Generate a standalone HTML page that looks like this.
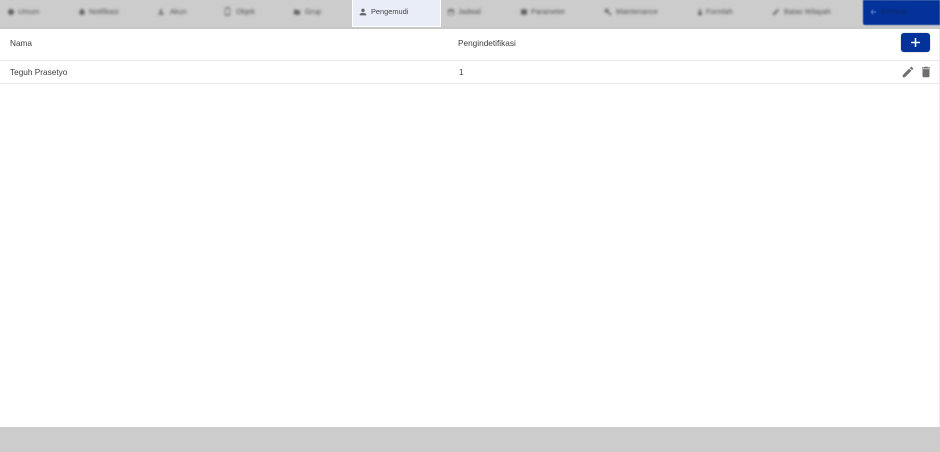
<!DOCTYPE html>
<html lang="id">
<head>
<meta charset="utf-8">
<title>Pengemudi</title>
<style>
html,body{margin:0;padding:0;width:940px;height:452px;overflow:hidden;background:#fff;font-family:"Liberation Sans",sans-serif;}
*{box-sizing:border-box;}
.a{position:absolute;}
#top{left:0;top:0;width:940px;height:29px;background:#cccccc;box-shadow:inset 0 -3px 3px -2px #c2c2c2;}
.tab{position:absolute;top:0;height:24px;filter:blur(1.2px);font-size:7.3px;color:#505050;line-height:24px;white-space:nowrap;}
.tab svg{position:absolute;top:8px;left:1px;width:8px;height:8px;fill:#5f5f5f;}
.tab span{position:absolute;top:0;}
#active{left:352px;top:0;width:89px;height:27px;background:#e8edf7;border:1px solid #fff;border-top:0;filter:blur(.3px);}
#active svg{position:absolute;left:5px;top:7px;width:10px;height:10px;fill:#666;}
#active span{position:absolute;left:18px;top:6px;font-size:7.4px;line-height:12px;color:#444;white-space:nowrap;}
#back{left:863px;top:0;width:77px;height:25px;background:#03339a;border-radius:0 0 0 2px;filter:blur(.5px);}
#back i{position:absolute;left:7px;top:9px;width:6px;height:6px;}
#back span{position:absolute;left:18px;top:6px;font-size:7.3px;line-height:12px;color:#0f2660;filter:blur(.7px);white-space:nowrap;}
.t{position:absolute;font-size:8.25px;line-height:12px;color:#3d3d3d;white-space:nowrap;filter:blur(.3px);}
.line{position:absolute;left:0;width:939px;height:1px;background:#e8e8e8;}
#add{left:901px;top:33px;width:29px;height:19px;background:#03339a;border-radius:3px;box-shadow:0 0 1px #777;}
#bottom{left:0;top:427px;width:940px;height:25px;background:#cccccc;}
#edge{left:939px;top:29px;width:1px;height:398px;background:#ececec;}
.ic{filter:blur(.35px);}
</style>
</head>
<body>
<div class="a" id="top"></div>

<div class="tab" style="left:6px;width:50px;"><svg viewBox="0 0 24 24"><circle cx="12" cy="12" r="9"/></svg><span style="left:12px">Umum</span></div>
<div class="tab" style="left:77px;width:60px;"><svg viewBox="0 0 24 24"><path d="M12 22a2 2 0 0 0 2-2h-4a2 2 0 0 0 2 2zm7-6v-5c0-3.500-2-6-5-6.700V3h-4v1.300C7 5 5 7.500 5 11v5l-2 2v1h18v-1z"/></svg><span style="left:12px">Notifikasi</span></div>
<div class="tab" style="left:156px;width:50px;"><svg viewBox="0 0 24 24"><path d="M12 12a4 4 0 1 0 0-8 4 4 0 0 0 0 8zm0 2c-3 0-8 1.500-8 4v2h16v-2c0-2.500-5-4-8-4z"/></svg><span style="left:14px">Akun</span></div>
<div class="tab" style="left:222px;width:50px;"><svg viewBox="0 0 24 24" style="height:13px;width:9px;top:5px;"><path d="M7 1h10a2 2 0 0 1 2 2v18a2 2 0 0 1-2 2H7a2 2 0 0 1-2-2V3a2 2 0 0 1 2-2zm0 3v16h10V4z"/></svg><span style="left:14px">Objek</span></div>
<div class="tab" style="left:292px;width:50px;"><svg viewBox="0 0 24 24"><path d="M3 5h7l2 2h9v13H3z"/></svg><span style="left:13px">Grup</span></div>

<div class="a" id="active"><svg viewBox="0 0 24 24"><path d="M12 12a4 4 0 1 0 0-8 4 4 0 0 0 0 8zm0 2c-3 0-8 1.500-8 4v2h16v-2c0-2.500-5-4-8-4z"/></svg><span>Pengemudi</span></div>

<div class="tab" style="left:446px;width:50px;"><svg viewBox="0 0 24 24"><path d="M3 4h18v17H3zm2 6v9h14v-9z"/></svg><span style="left:12px">Jadwal</span></div>
<div class="tab" style="left:519px;width:60px;"><svg viewBox="0 0 24 24"><path d="M3 4h18v16H3z"/></svg><span style="left:12px">Parameter</span></div>
<div class="tab" style="left:603px;width:70px;"><svg viewBox="0 0 24 24"><path d="M22 19l-9-9c1-2.500.5-5-1.500-7-2-2-5-2.500-7.500-1.300L8.500 6 6 8.500 1.700 4.200C.4 6.700 1 9.700 3 11.700c2 2 4.500 2.500 7 1.500l9 9c.4.4 1 .4 1.400 0l1.600-1.700c.4-.4.4-1 0-1.500z"/></svg><span style="left:13px">Maintenance</span></div>
<div class="tab" style="left:695px;width:50px;"><svg viewBox="0 0 24 24"><path d="M12 3a3 3 0 1 1 0 6 3 3 0 0 1 0-6zM7 11h10l1 10H6z"/></svg><span style="left:11px">Formlah</span></div>
<div class="tab" style="left:771px;width:70px;"><svg viewBox="0 0 24 24"><path d="M3 21v-4L15 5l4 4L7 21zM16 4l2-2 4 4-2 2z"/></svg><span style="left:13px">Batas Wilayah</span></div>

<div class="a" id="back"><i><svg viewBox="0 0 6 6" width="6" height="6" style="display:block"><path d="M6 2.500H2L3.500 1 3 .5 .5 3 3 5.500l.5-.5L2 3.500h4z" fill="#6f8cc8"/></svg></i><span>Kembali</span></div>

<div class="t" style="left:10px;top:38px;">Nama</div>
<div class="t" style="left:458px;top:38px;">Pengindetifikasi</div>
<div class="a" id="add"><svg width="29" height="19" viewBox="0 0 29 19" style="display:block"><path d="M14.500 5v9M10 9.500h9" stroke="#fff" stroke-width="1.500" fill="none"/></svg></div>
<div class="line" style="top:60px;"></div>

<div class="t" style="left:10px;top:67px;">Teguh Prasetyo</div>
<div class="t" style="left:459px;top:67px;">1</div>
<svg class="a ic" style="left:901px;top:65px;" width="14" height="14" viewBox="0 0 24 24"><path fill="#6e6e6e" d="M3 17.250V21h3.750L17.810 9.940l-3.750-3.750L3 17.250zM20.710 7.040a1 1 0 0 0 0-1.410l-2.340-2.340a1 1 0 0 0-1.410 0l-1.830 1.830 3.750 3.750 1.830-1.830z"/></svg>
<svg class="a ic" style="left:919px;top:65px;" width="14" height="14" viewBox="0 0 24 24"><path fill="#6e6e6e" d="M6 19c0 1.100.9 2 2 2h8c1.100 0 2-.9 2-2V7H6v12zM19 4h-3.500l-1-1h-5l-1 1H5v2h14V4z"/></svg>
<div class="line" style="top:83px;"></div>

<div class="a" id="edge"></div>
<div class="a" id="bottom"></div>
</body>
</html>
